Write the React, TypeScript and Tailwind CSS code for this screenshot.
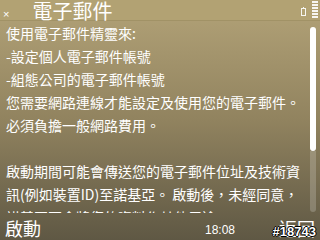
import React from 'react';

const lines = [
    '使用電子郵件精靈來:',
    '-設定個人電子郵件帳號',
    '-組態公司的電子郵件帳號',
    '您需要網路連線才能設定及使用您的電子郵件。',
    '必須負擔一般網路費用。',
    '\u00a0',
    '啟動期間可能會傳送您的電子郵件位址及技術資',
    '訊(例如裝置ID)至諾基亞。 啟動後，未經同意，',
    '諾基亞不會將您的資料作其他用途。',
];

const cjk = { fontFamily: '"Noto Sans CJK TC", "Liberation Sans", sans-serif' };

const SignalBars: React.FC = () => (
    <div className="flex flex-col gap-[1px] pt-[1px]">
        {[0, 1, 2, 3, 4, 5].map((i) => (
            <div key={i} className="w-[6px] h-[2px] bg-white/90" />
        ))}
    </div>
);

const App: React.FC = () => {
    return (
        <div
            className="w-[320px] h-[240px] overflow-hidden flex flex-col text-white bg-gradient-to-b from-[#b3a378] via-[#91835f] to-[#5f5844]"
            style={cjk}
        >
            {/* title bar */}
            <div className="h-[21px] flex items-start bg-[#b2a273] border-b border-[#a19266] relative">
                <span className="text-[11px] leading-none mt-[9px] ml-[3px] font-['Liberation_Sans']">×</span>
                <span className="text-[20px] leading-none ml-[23px] mt-[1px]">電子郵件</span>
                <div className="ml-auto flex items-start mr-[2px]">
                    <div className="w-[5px] h-[8px] border border-white/90 mt-[8px] mr-[6px] relative">
                        <div className="absolute -top-[2px] left-[1px] w-[1px] h-[1px] bg-white/90" />
                    </div>
                    <SignalBars />
                </div>
            </div>

            {/* body */}
            <div className="flex-1 flex min-h-0">
                <div className="flex-1 overflow-hidden pl-[6px] pt-[1px] text-[14px] leading-[23px] whitespace-nowrap">
                    {lines.map((l, i) => (
                        <div key={i}>{l}</div>
                    ))}
                </div>
                <div className="w-[6px] mr-[4px] mt-[6px] mb-[1px] flex flex-col">
                    <div className="h-[124px] bg-white rounded-[3px]" />
                    <div className="flex-1 bg-white/20 rounded-b-[3px]" />
                </div>
            </div>

            {/* softkeys */}
            <div className="h-[27px] flex items-end relative">
                <span className="text-[18px] leading-none ml-[5px] mb-[3px]">啟動</span>
                <span className="text-[12px] leading-none ml-auto mb-[4px] mr-[44px] font-['Liberation_Sans']">18:08</span>
                <span className="text-[18px] leading-none mr-[5px] mb-[3px]">返回</span>
                <span
                    className="absolute right-[4px] bottom-[2px] text-[13px] leading-none font-bold font-['Liberation_Sans'] text-white"
                    style={{ textShadow: '1px 0 #000, -1px 0 #000, 0 1px #000, 0 -1px #000' }}
                >
                    #18743
                </span>
            </div>
        </div>
    );
};

export default App;
